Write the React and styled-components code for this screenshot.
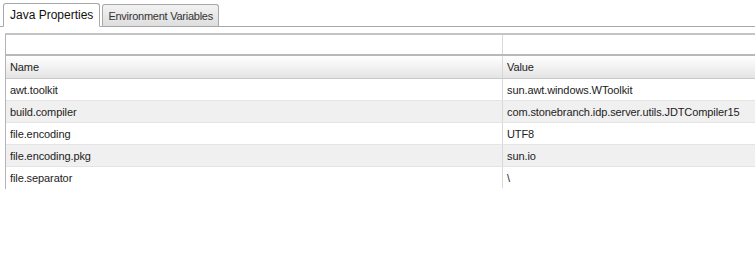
import React from 'react'
import styled, { createGlobalStyle } from 'styled-components'

const Global = createGlobalStyle`
    body {
        margin: 0;
        background: #fff;
        font-family: "Liberation Sans", Arial, sans-serif;
        font-size: 11px;
        color: #222;
    }
`
const Page = styled.div`
    width: 755px;
    height: 280px;
    overflow: hidden;
`
const TabStrip = styled.div`
    display: flex;
    align-items: flex-end;
    padding-left: 3px;
    border-bottom: 1px solid #a8a8a8;
    box-sizing: border-box;
    height: 27px;
`
const Tab = styled.div`
    height: ${p => (p.$active ? '24px' : '22px')};
    margin-bottom: ${p => (p.$active ? '-1px' : '0')};
    margin-right: 2px;
    padding: 0 ${p => (p.$active ? '6px' : '5px')};
    display: flex;
    align-items: center;
    border: 1px solid #a8a8a8;
    border-bottom: ${p => (p.$active ? '1px solid #fff' : 'none')};
    border-radius: 3px 3px 0 0;
    background: ${p => (p.$active ? '#fff' : 'linear-gradient(#f2f2f2, #dedede)')};
    color: ${p => (p.$active ? '#111' : '#333')};
    font-size: ${p => (p.$active ? '12px' : '11px')};
    letter-spacing: ${p => (p.$active ? '0' : '-0.25px')};
    box-sizing: border-box;
`
const Grid = styled.div`
    margin: 6px 0 0 5px;
    border-left: 1px solid #b4b4b4;
    border-top: 2px solid #c4c4c4;
`
const Row = styled.div`
    display: grid;
    grid-template-columns: 497px 1fr;
    height: ${p => p.$h || 22}px;
    background: ${p => p.$bg || '#fff'};
    border-bottom: 1px solid ${p => p.$line || '#e4e4e4'};
    box-sizing: border-box;
`
const FilterRow = styled(Row)`
    border-bottom: 2px solid #b8b8b8;
`
const HeadRow = styled(Row)`
    background: linear-gradient(#ffffff, #e4e4e4);
    border-bottom: 1px solid #c8c8c8;
`
const Cell = styled.div`
    display: flex;
    align-items: center;
    padding-left: 4px;
    white-space: nowrap;
    overflow: hidden;
    letter-spacing: -0.1px;
    border-right: ${p => (p.$divider ? '1px solid #d8d8d8' : 'none')};
`

const props = [
    ['awt.toolkit', 'sun.awt.windows.WToolkit'],
    ['build.compiler', 'com.stonebranch.idp.server.utils.JDTCompiler15'],
    ['file.encoding', 'UTF8'],
    ['file.encoding.pkg', 'sun.io'],
    ['file.separator', '\\'],
]

export default function App() {
    return (
        <Page>
            <Global />
            <TabStrip>
                <Tab $active>Java Properties</Tab>
                <Tab>Environment Variables</Tab>
            </TabStrip>
            <Grid>
                <FilterRow $h={21}>
                    <Cell $divider />
                    <Cell />
                </FilterRow>
                <HeadRow $h={23}>
                    <Cell $divider>Name</Cell>
                    <Cell>Value</Cell>
                </HeadRow>
                {props.map(([k, v], i) => (
                    <Row key={k} $bg={i % 2 ? '#f0f0f0' : '#fff'} $line={i === props.length - 1 ? 'transparent' : '#e4e4e4'}>
                        <Cell $divider>{k}</Cell>
                        <Cell>{v}</Cell>
                    </Row>
                ))}
            </Grid>
        </Page>
    )
}
